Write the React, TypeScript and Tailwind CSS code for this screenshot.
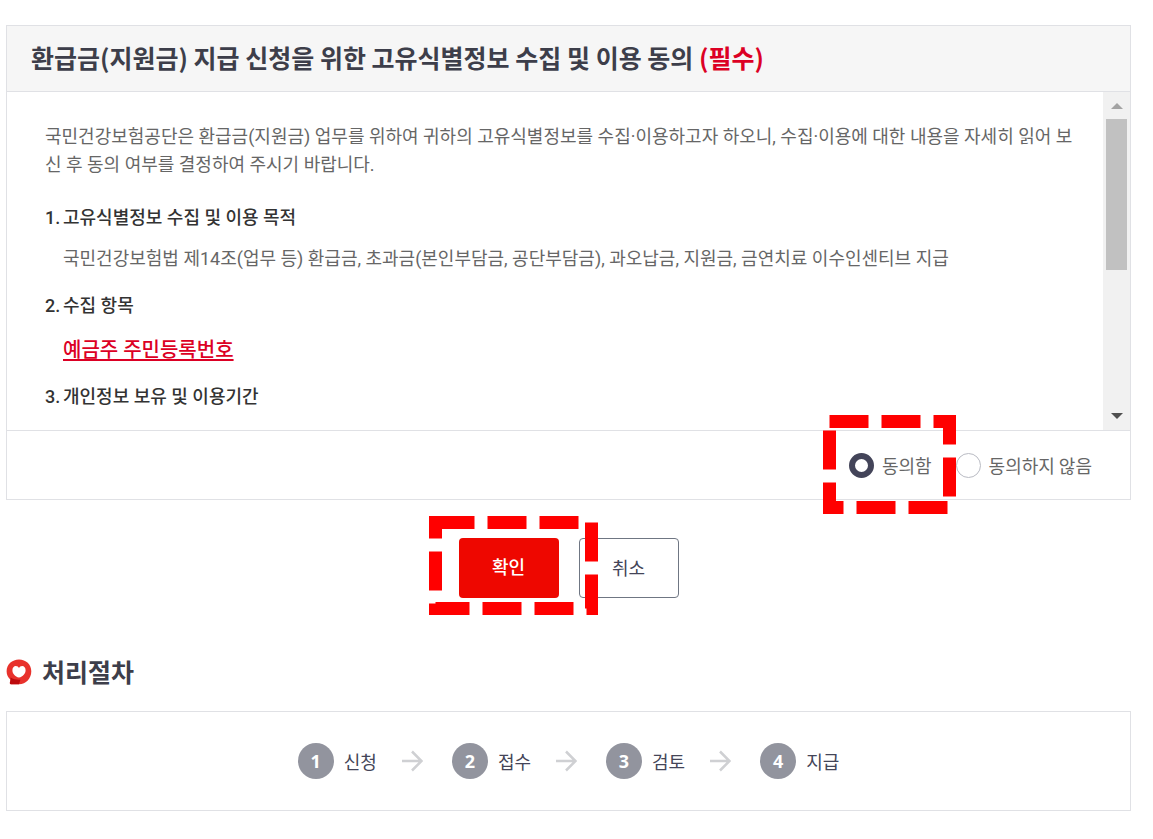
import { useState } from 'react';

const steps = ['신청', '접수', '검토', '지급'];

const terms = [
  {
    title: '고유식별정보 수집 및 이용 목적',
    body: '국민건강보험법 제14조(업무 등) 환급금, 초과금(본인부담금, 공단부담금), 과오납금, 지원금, 금연치료 이수인센티브 지급',
  },
  { title: '수집 항목', body: '예금주 주민등록번호', highlight: true },
  { title: '개인정보 보유 및 이용기간' },
];

interface MarkerProps {
  width: number;
  height: number;
  className: string;
}

// Dashed frame laid over the control the user has to click
function Marker({ width, height, className }: MarkerProps) {
  return (
    <svg
      width={width}
      height={height}
      viewBox={`0 0 ${width} ${height}`}
      className={`absolute max-w-none pointer-events-none z-10 ${className}`}
      aria-hidden="true"
    >
      <path
        d={`M6.5 6.5H${width - 6.5}V${height - 6.5}H6.5Z`}
        fill="none"
        stroke="#ff0000"
        strokeWidth="13"
        strokeDasharray="39 13"
      />
    </svg>
  );
}

function HeartIcon() {
  return (
    <svg width="26" height="26" viewBox="0 0 26 26" className="shrink-0" aria-hidden="true">
      <path
        d="M13 0.5C20 0.5 25.3 5.5 25.3 12.3C25.3 19.5 20 25.3 13 25.3H5C3.6 25.3 3.6 23.8 4.2 22.6L4.6 20.8C2 18.8 0.6 15.8 0.6 12.3C0.6 5.5 6 0.5 13 0.5Z"
        fill="#e8322c"
      />
      <path d="M4.6 18.6C7.4 20.4 10.4 21 14.4 20.8L13 25.3H5C3.6 25.3 3.6 23.8 4.2 22.6Z" fill="#bd0a0d" />
      <path
        d="M13 18.6C9 17.4 6.4 14.8 6.4 11.2C6.4 8.6 7.9 6.9 9.8 6.9C11.4 6.9 12.4 7.8 13 9C13.6 7.8 14.6 6.9 16.2 6.9C18.1 6.9 19.6 8.6 19.6 11.2C19.6 14.8 17 17.4 13 18.6Z"
        fill="#ffffff"
      />
    </svg>
  );
}

function StepArrow() {
  return (
    <svg width="22" height="22" viewBox="0 0 22 22" className="ml-6 mr-[29px] shrink-0" aria-hidden="true">
      <path d="M1 11H20M11 1.5L20.5 11L11 20.5" fill="none" stroke="#cfd0d3" strokeWidth="2.5" />
    </svg>
  );
}

export default function App() {
  const [agree, setAgree] = useState('yes');

  const radioClass =
    'appearance-none w-[25px] h-[25px] rounded-full bg-white border border-[#b9bbc3] checked:border-[6px] checked:border-[#434459] shrink-0';

  return (
    <main className="bg-white pt-[25px] pb-7 pl-[6px] pr-[22px] font-['Noto_Sans_CJK_KR',sans-serif] text-[#666666]">
      {/* Consent */}
      <section className="border border-[#e0e1e5]">
        <h2 className="bg-[#f6f6f6] border-b border-[#e0e1e5] px-6 pt-[13px] pb-[15px] text-[25px] leading-[37px] font-bold text-[#3d3e4a]">
          환급금(지원금) 지급 신청을 위한 고유식별정보 수집 및 이용 동의{' '}
          <span className="text-[#dc0024]">(필수)</span>
        </h2>

        <div className="flex h-[338px]">
          <div className="flex-1 overflow-hidden pl-[38px] pr-6 pt-[31px] text-[18px] leading-7 font-['Roboto','Noto_Sans_CJK_KR',sans-serif]">
            <p className="break-all">
              국민건강보험공단은 환급금(지원금) 업무를 위하여 귀하의 고유식별정보를 수집·이용하고자 하오니,
              수집·이용에 대한 내용을 자세히 읽어 보신 후 동의 여부를 결정하여 주시기 바랍니다.
            </p>
            <ol className="mt-[25px]">
              {terms.map((term, idx) => (
                <li key={term.title} className="flex mb-[19px]">
                  <span className="w-[18px] shrink-0 font-medium text-[#333333]">{idx + 1}.</span>
                  <div>
                    <h3 className="font-medium text-[#333333]">{term.title}</h3>
                    {term.highlight ? (
                      <p className="mt-4 text-[20px] font-medium text-[#dc0024] underline underline-offset-2">
                        {term.body}
                      </p>
                    ) : (
                      term.body && <p className="mt-[13px]">{term.body}</p>
                    )}
                  </div>
                </li>
              ))}
            </ol>
          </div>

          {/* Scrollbar */}
          <div className="w-[27px] shrink-0 bg-[#f1f1f1] flex flex-col items-center">
            <button type="button" aria-label="위로" className="h-[27px] flex items-center">
              <svg width="12" height="6" viewBox="0 0 12 6">
                <path d="M0 6L6 0L12 6Z" fill="#a3a3a3" />
              </svg>
            </button>
            <div className="w-[21px] h-[151px] bg-[#c1c1c1]" />
            <button type="button" aria-label="아래로" className="h-[29px] mt-auto flex items-center">
              <svg width="12" height="6" viewBox="0 0 12 6">
                <path d="M0 0L6 6L12 0Z" fill="#505050" />
              </svg>
            </button>
          </div>
        </div>

        <div className="flex justify-end items-center gap-6 h-[69px] pr-[38px] border-t border-[#e0e1e5] text-[18px] leading-7">
          <label className="relative flex items-center gap-2">
            <input
              type="radio"
              name="agree"
              checked={agree === 'yes'}
              onChange={() => setAgree('yes')}
              className={radioClass}
            />
            동의함
            <Marker width={133} height={99} className="-left-[26px] -top-[36px]" />
          </label>
          <label className="flex items-center gap-2">
            <input
              type="radio"
              name="agree"
              checked={agree === 'no'}
              onChange={() => setAgree('no')}
              className={radioClass}
            />
            동의하지 않음
          </label>
        </div>
      </section>

      <div className="mt-[38px] flex justify-center gap-5 text-[18px]">
        <div className="relative">
          <button type="button" className="w-[100px] h-[60px] pb-1 rounded bg-[#ee0700] text-white font-medium">
            확인
          </button>
          <Marker width={169} height={99} className="-left-[30px] -top-[22px]" />
        </div>
        <button type="button" className="w-[100px] h-[60px] pb-[2px] rounded border border-[#6f7683] text-[#444558]">
          취소
        </button>
      </div>

      {/* Procedure */}
      <section className="mt-[55px]">
        <h2 className="flex items-center gap-[10px] text-[25px] leading-[37px] font-bold text-[#3d3e4a]">
          <HeartIcon />
          처리절차
        </h2>
        <ol className="mt-[21px] h-[100px] border border-[#e0e1e5] flex justify-center items-center text-[18px] text-[#444558]">
          {steps.map((step, idx) => (
            <li key={step} className="flex items-center">
              {idx > 0 && <StepArrow />}
              <span className="w-9 h-9 mr-[10px] rounded-full bg-[#92949e] text-white font-bold font-['Noto_Sans',sans-serif] flex items-center justify-center">
                {idx + 1}
              </span>
              {step}
            </li>
          ))}
        </ol>
      </section>
    </main>
  );
}
